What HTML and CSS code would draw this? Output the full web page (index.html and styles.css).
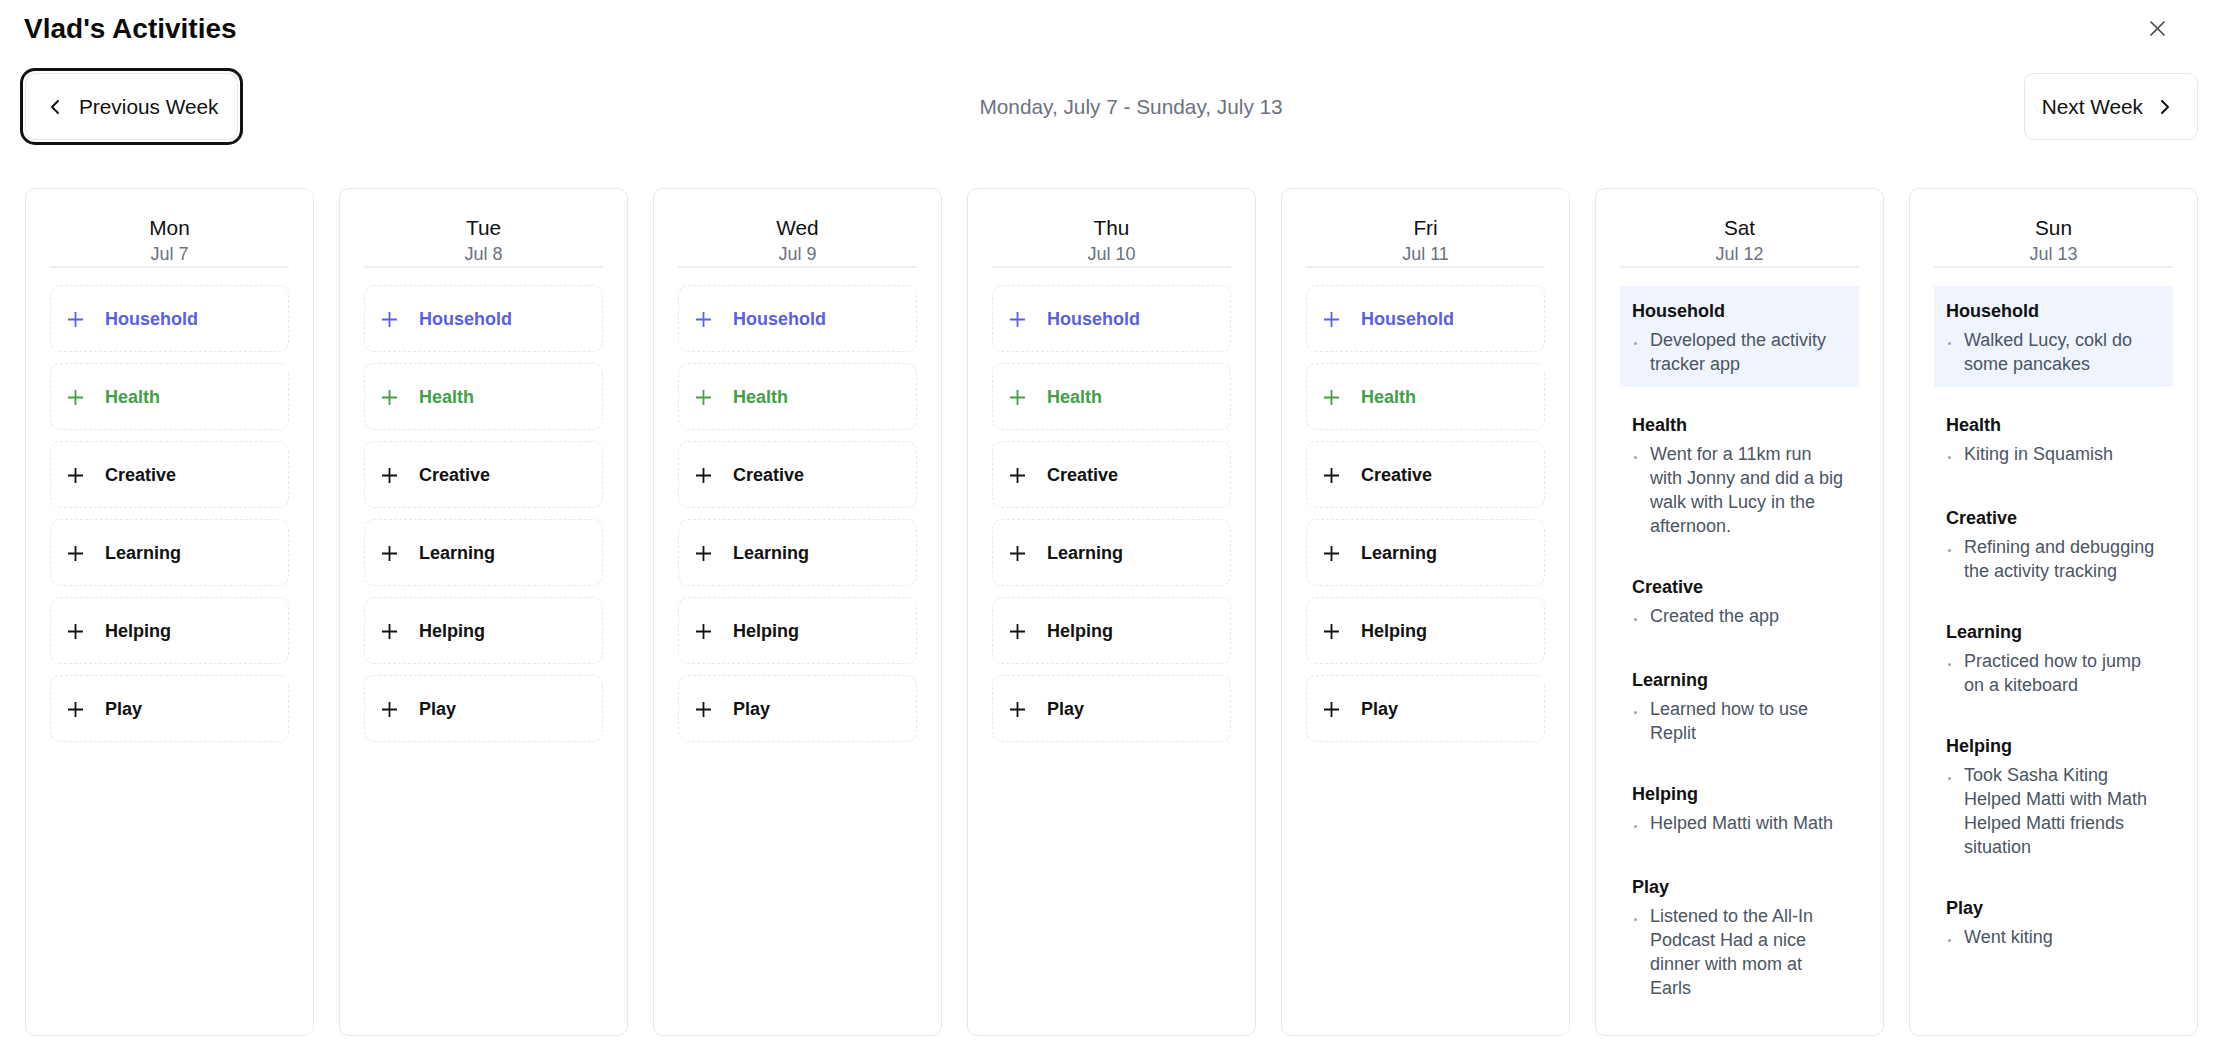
FILE: index.html
```html
<!DOCTYPE html>
<html lang="en">
<head>
<meta charset="utf-8">
<title>Vlad's Activities</title>
<link rel="stylesheet" href="styles.css">
</head>
<body>
<div class="app">
  <header class="topbar">
    <h1 class="title">Vlad's Activities</h1>
    <button class="close" aria-label="Close">
      <svg width="15" height="15" viewBox="0 0 15 15"><path d="M1 1L14 14M14 1L1 14" stroke="currentColor" stroke-width="1.6" stroke-linecap="round" fill="none"/></svg>
    </button>
  </header>

  <nav class="weeknav">
    <button class="navbtn navbtn--prev">
      <svg width="24" height="24" viewBox="0 0 24 24"><path d="M15 18l-6-6 6-6" stroke="currentColor" stroke-width="2" fill="none" stroke-linecap="round" stroke-linejoin="round"/></svg>
      <span>Previous Week</span>
    </button>
    <div class="range">Monday, July 7 - Sunday, July 13</div>
    <button class="navbtn navbtn--next">
      <span>Next Week</span>
      <svg width="24" height="24" viewBox="0 0 24 24"><path d="M9 18l6-6-6-6" stroke="currentColor" stroke-width="2" fill="none" stroke-linecap="round" stroke-linejoin="round"/></svg>
    </button>
  </nav>

  <main class="week">
    <section class="day">
      <div class="dayhead"><div class="dayname">Mon</div><div class="daydate">Jul 7</div></div>
      <div class="adds">
        <div class="add add--household"><svg class="plus" viewBox="0 0 17 17"><path d="M8.5 1v15M1 8.5h15"/></svg><span>Household</span></div>
        <div class="add add--health"><svg class="plus" viewBox="0 0 17 17"><path d="M8.5 1v15M1 8.5h15"/></svg><span>Health</span></div>
        <div class="add"><svg class="plus" viewBox="0 0 17 17"><path d="M8.5 1v15M1 8.5h15"/></svg><span>Creative</span></div>
        <div class="add"><svg class="plus" viewBox="0 0 17 17"><path d="M8.5 1v15M1 8.5h15"/></svg><span>Learning</span></div>
        <div class="add"><svg class="plus" viewBox="0 0 17 17"><path d="M8.5 1v15M1 8.5h15"/></svg><span>Helping</span></div>
        <div class="add"><svg class="plus" viewBox="0 0 17 17"><path d="M8.5 1v15M1 8.5h15"/></svg><span>Play</span></div>
      </div>
    </section>
    <section class="day">
      <div class="dayhead"><div class="dayname">Tue</div><div class="daydate">Jul 8</div></div>
      <div class="adds">
        <div class="add add--household"><svg class="plus" viewBox="0 0 17 17"><path d="M8.5 1v15M1 8.5h15"/></svg><span>Household</span></div>
        <div class="add add--health"><svg class="plus" viewBox="0 0 17 17"><path d="M8.5 1v15M1 8.5h15"/></svg><span>Health</span></div>
        <div class="add"><svg class="plus" viewBox="0 0 17 17"><path d="M8.5 1v15M1 8.5h15"/></svg><span>Creative</span></div>
        <div class="add"><svg class="plus" viewBox="0 0 17 17"><path d="M8.5 1v15M1 8.5h15"/></svg><span>Learning</span></div>
        <div class="add"><svg class="plus" viewBox="0 0 17 17"><path d="M8.5 1v15M1 8.5h15"/></svg><span>Helping</span></div>
        <div class="add"><svg class="plus" viewBox="0 0 17 17"><path d="M8.5 1v15M1 8.5h15"/></svg><span>Play</span></div>
      </div>
    </section>
    <section class="day">
      <div class="dayhead"><div class="dayname">Wed</div><div class="daydate">Jul 9</div></div>
      <div class="adds">
        <div class="add add--household"><svg class="plus" viewBox="0 0 17 17"><path d="M8.5 1v15M1 8.5h15"/></svg><span>Household</span></div>
        <div class="add add--health"><svg class="plus" viewBox="0 0 17 17"><path d="M8.5 1v15M1 8.5h15"/></svg><span>Health</span></div>
        <div class="add"><svg class="plus" viewBox="0 0 17 17"><path d="M8.5 1v15M1 8.5h15"/></svg><span>Creative</span></div>
        <div class="add"><svg class="plus" viewBox="0 0 17 17"><path d="M8.5 1v15M1 8.5h15"/></svg><span>Learning</span></div>
        <div class="add"><svg class="plus" viewBox="0 0 17 17"><path d="M8.5 1v15M1 8.5h15"/></svg><span>Helping</span></div>
        <div class="add"><svg class="plus" viewBox="0 0 17 17"><path d="M8.5 1v15M1 8.5h15"/></svg><span>Play</span></div>
      </div>
    </section>
    <section class="day">
      <div class="dayhead"><div class="dayname">Thu</div><div class="daydate">Jul 10</div></div>
      <div class="adds">
        <div class="add add--household"><svg class="plus" viewBox="0 0 17 17"><path d="M8.5 1v15M1 8.5h15"/></svg><span>Household</span></div>
        <div class="add add--health"><svg class="plus" viewBox="0 0 17 17"><path d="M8.5 1v15M1 8.5h15"/></svg><span>Health</span></div>
        <div class="add"><svg class="plus" viewBox="0 0 17 17"><path d="M8.5 1v15M1 8.5h15"/></svg><span>Creative</span></div>
        <div class="add"><svg class="plus" viewBox="0 0 17 17"><path d="M8.5 1v15M1 8.5h15"/></svg><span>Learning</span></div>
        <div class="add"><svg class="plus" viewBox="0 0 17 17"><path d="M8.5 1v15M1 8.5h15"/></svg><span>Helping</span></div>
        <div class="add"><svg class="plus" viewBox="0 0 17 17"><path d="M8.5 1v15M1 8.5h15"/></svg><span>Play</span></div>
      </div>
    </section>
    <section class="day">
      <div class="dayhead"><div class="dayname">Fri</div><div class="daydate">Jul 11</div></div>
      <div class="adds">
        <div class="add add--household"><svg class="plus" viewBox="0 0 17 17"><path d="M8.5 1v15M1 8.5h15"/></svg><span>Household</span></div>
        <div class="add add--health"><svg class="plus" viewBox="0 0 17 17"><path d="M8.5 1v15M1 8.5h15"/></svg><span>Health</span></div>
        <div class="add"><svg class="plus" viewBox="0 0 17 17"><path d="M8.5 1v15M1 8.5h15"/></svg><span>Creative</span></div>
        <div class="add"><svg class="plus" viewBox="0 0 17 17"><path d="M8.5 1v15M1 8.5h15"/></svg><span>Learning</span></div>
        <div class="add"><svg class="plus" viewBox="0 0 17 17"><path d="M8.5 1v15M1 8.5h15"/></svg><span>Helping</span></div>
        <div class="add"><svg class="plus" viewBox="0 0 17 17"><path d="M8.5 1v15M1 8.5h15"/></svg><span>Play</span></div>
      </div>
    </section>
    <section class="day">
      <div class="dayhead"><div class="dayname">Sat</div><div class="daydate">Jul 12</div></div>
      <div class="entries">
        <div class="entry entry--active"><div class="entry-title">Household</div><ul class="items"><li>Developed the activity tracker app</li></ul></div>
        <div class="entry"><div class="entry-title">Health</div><ul class="items"><li>Went for a 11km run with Jonny and did a big walk with Lucy in the afternoon.</li></ul></div>
        <div class="entry"><div class="entry-title">Creative</div><ul class="items"><li>Created the app</li></ul></div>
        <div class="entry"><div class="entry-title">Learning</div><ul class="items"><li>Learned how to use Replit</li></ul></div>
        <div class="entry"><div class="entry-title">Helping</div><ul class="items"><li>Helped Matti with Math</li></ul></div>
        <div class="entry"><div class="entry-title">Play</div><ul class="items"><li>Listened to the All-In Podcast Had a nice dinner with mom at Earls</li></ul></div>
      </div>
    </section>
    <section class="day">
      <div class="dayhead"><div class="dayname">Sun</div><div class="daydate">Jul 13</div></div>
      <div class="entries">
        <div class="entry entry--active"><div class="entry-title">Household</div><ul class="items"><li>Walked Lucy, cokl do some pancakes</li></ul></div>
        <div class="entry"><div class="entry-title">Health</div><ul class="items"><li>Kiting in Squamish</li></ul></div>
        <div class="entry"><div class="entry-title">Creative</div><ul class="items"><li>Refining and debugging the activity tracking</li></ul></div>
        <div class="entry"><div class="entry-title">Learning</div><ul class="items"><li>Practiced how to jump on a kiteboard</li></ul></div>
        <div class="entry"><div class="entry-title">Helping</div><ul class="items"><li>Took Sasha Kiting Helped Matti with Math Helped Matti friends situation</li></ul></div>
        <div class="entry"><div class="entry-title">Play</div><ul class="items"><li>Went kiting</li></ul></div>
      </div>
    </section>
  </main>
</div>
</body>
</html>
```

FILE: styles.css
```css
* { box-sizing: border-box; }

html, body {
  margin: 0;
  background: #ffffff;
  font-family: "Liberation Sans", Arial, sans-serif;
  color: #111111;
}

.app {
  padding: 0 16px 8px 25px;
}

.topbar {
  height: 56px;
  display: flex;
  align-items: center;
  justify-content: space-between;
}

.title {
  margin: 0 0 0 -1px;
  padding-top: 1px;
  font-size: 28px;
  line-height: 34px;
  font-weight: 700;
  color: #0a0a0a;
}

.close {
  width: 15px;
  height: 15px;
  padding: 0;
  margin-right: 33px;
  border: 0;
  background: none;
  color: #444444;
  display: flex;
}

.weeknav {
  margin-top: 17px;
  height: 67px;
  display: flex;
  align-items: center;
  justify-content: space-between;
}

.navbtn {
  height: 67px;
  display: inline-flex;
  align-items: center;
  border: 1px solid #e5e7eb;
  border-radius: 10px;
  background: #ffffff;
  font-family: "Liberation Sans", Arial, sans-serif;
  font-size: 20.8px;
  color: #111111;
}

.navbtn svg { flex: none; }

.navbtn--prev {
  padding: 0 19px 0 17px;
  gap: 12px;
  box-shadow: 0 0 0 2px #ffffff, 0 0 0 5px #111111;
}

.navbtn--next {
  padding: 0 20px 0 17px;
  gap: 10px;
}

.range {
  font-size: 20.8px;
  line-height: 21px;
  color: #6b7280;
}

.week {
  margin-top: 48px;
  display: grid;
  grid-template-columns: repeat(7, 1fr);
  gap: 25px;
}

.day {
  border: 1px solid #e8e8e8;
  border-radius: 10px;
  padding: 24px;
  background: #ffffff;
}

.dayhead {
  text-align: center;
  padding-bottom: 1px;
  border-bottom: 2px solid #eeeeee;
}

.dayname {
  font-size: 20.8px;
  line-height: 30px;
  color: #111111;
}

.daydate {
  font-size: 18px;
  line-height: 22px;
  color: #6b7280;
}

.adds {
  margin-top: 17px;
  display: flex;
  flex-direction: column;
  gap: 11px;
}

.add {
  height: 67px;
  border: 1px dashed #e5e7eb;
  border-radius: 10px;
  padding: 2px 16px 0;
  display: flex;
  align-items: center;
  gap: 21px;
  font-size: 18px;
  font-weight: 700;
  color: #111111;
}

.plus {
  width: 17px;
  height: 17px;
  flex: none;
  fill: none;
  stroke: currentColor;
  stroke-width: 1.8;
}

.add--household { color: #5b5fe0; }
.add--health { color: #43a047; }

.entries {
  margin-top: 18px;
  display: flex;
  flex-direction: column;
  gap: 13px;
}

.entry {
  min-height: 80px;
  padding: 15px 13px 11px 12px;
}

.entry--active {
  background: #eff4fd;
}

.entry-title {
  font-size: 18px;
  line-height: 20px;
  font-weight: 700;
  color: #111111;
  margin-bottom: 7px;
}

.items {
  list-style: none;
  margin: 0;
  padding: 0;
}

.items li {
  position: relative;
  padding-left: 18px;
  font-size: 18px;
  line-height: 24px;
  color: #4b5563;
}

.items li::before {
  content: "";
  position: absolute;
  left: 2px;
  top: 14px;
  width: 3px;
  height: 3px;
  border-radius: 50%;
  background: #9ca3af;
}
```
